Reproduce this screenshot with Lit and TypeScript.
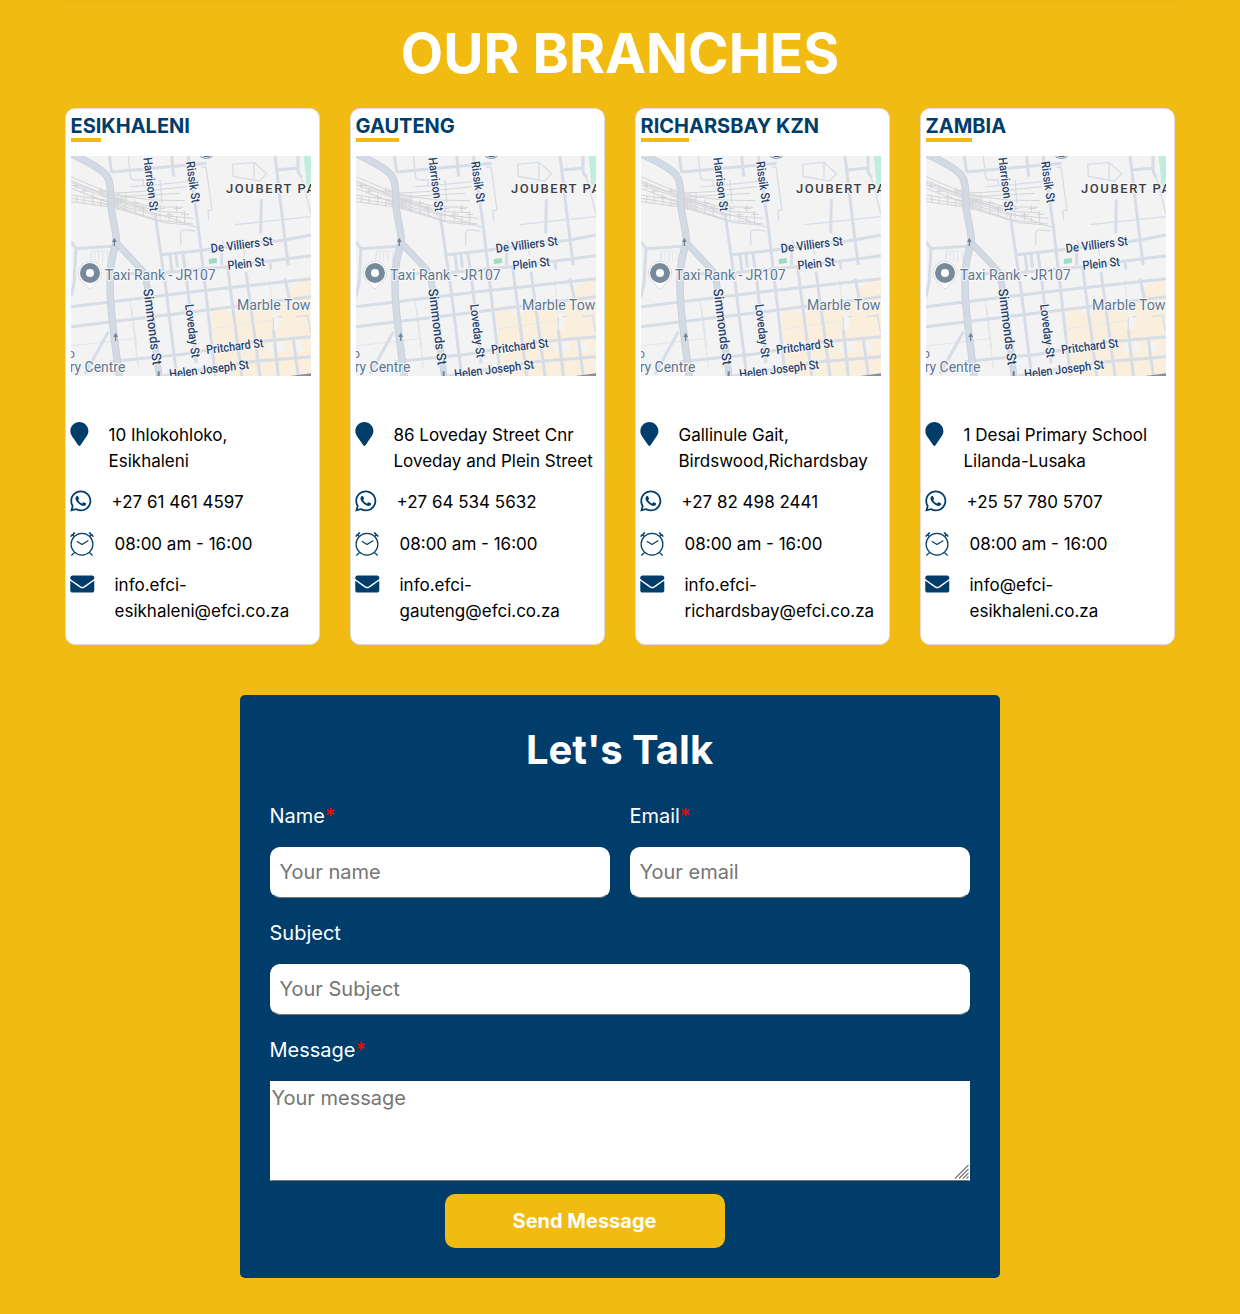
import { LitElement, html, svg, css } from "lit";
import { customElement, property } from "lit/decorators.js";

interface Branch {
  name: string;
  bar: number;
  address: string[];
  phone: string;
  email: string[];
}

const BRANCHES: Branch[] = [
  { name: "ESIKHALENI", bar: 30, address: ["10 Ihlokohloko,", "Esikhaleni"], phone: "+27 61 461 4597", email: ["info.efci-", "esikhaleni@efci.co.za"] },
  { name: "GAUTENG", bar: 43, address: ["86 Loveday Street Cnr", "Loveday and Plein Street"], phone: "+27 64 534 5632", email: ["info.efci-", "gauteng@efci.co.za"] },
  { name: "RICHARSBAY KZN", bar: 48, address: ["Gallinule Gait,", "Birdswood,Richardsbay"], phone: "+27 82 498 2441", email: ["info.efci-", "richardsbay@efci.co.za"] },
  { name: "ZAMBIA", bar: 46, address: ["1 Desai Primary School", "Lilanda-Lusaka"], phone: "+25 57 780 5707", email: ["info@efci-", "esikhaleni.co.za"] },
];

/* Street map, drawn on a 3x grid: 720 x 660 units for 240 x 220 px. */
@customElement("street-map")
export class StreetMap extends LitElement {
  static styles = css`
    :host { display: block; width: 240px; height: 220px; }
    svg { display: block; }
    .base { fill: #f3f3f4; }
    .block { fill: #f9efdc; }
    .park { fill: #bfeedd; }
    .line { fill: none; stroke: #d6dde6; }
    .edge { fill: none; stroke: #c3ccd8; }
    .core { fill: none; stroke: #d2dae4; }
    .rail { fill: none; stroke: #d3d4d7; stroke-width: 3; }
    .thin { fill: none; stroke: #e0e4ea; stroke-width: 3; }
    .label { font-family: Roboto, sans-serif; paint-order: stroke; stroke: #f7f8fa; stroke-width: 6px; stroke-linejoin: round; }
    .street { fill: #28426b; font-weight: 500; font-size: 37px; }
    .place { fill: #5f7690; font-size: 43px; }
    .area { fill: #3d4043; font-weight: 500; font-size: 39px; }
  `;

  render() {
    const main = "M26 8C70 28 110 48 134 70C152 88 152 115 153 165C156 215 176 258 167 287C150 330 148 380 151 440C156 530 170 610 178 682";
    const diagonal = "M169 278L244 358Q258 375 262 415L298 682";
    const ties = svg`${[50, 72, 98, 122, 150, 172, 198, 225, 250, 276, 300, 328, 350, 374].map(
      (x, i) => svg`<path d=${`M${x} ${85 + x * 0.23 + (i % 3) * 12}v20M${x - 9} ${95 + x * 0.23 + (i % 3) * 12}h22M${x} ${128 + x * 0.2}v18`} />`,
    )}`;
    return html`<svg width="240" height="220" viewBox="33 18 720 660">
      <rect class="base" x="33" y="18" width="720" height="660" />
      <path class="block" d="M453 482L498 476L502 492L533 488L531 470L634 462L640 480L690 440L686 416L722 392L753 386V678H472L462 600Z" />
      <path class="base" d="M624 580l50-4 4 26-50 6zM694 578l30-3 4 28-32 4zM640 490l18-2v50h-18z" />
      <path class="park" d="M731 18h22v76h-14z" />
      <path class="park" d="M735 94h18v30z" />
      <g class="thin">
        <path d="M210 450L235 655M215 470L230 590M628 390L640 480" />
        <path stroke-dasharray="5 4" d="M460 536L636 512" />
        <path d="M33 588L220 566M95 325v-22h48M92 310v40M105 306v26M116 306v30M128 306v30M143 306v30" />
      </g>
      <g class="line" stroke-width="4">
        <path d="M205 18l6 58q2 16 14 14h25v16M211 110l60-4 139-14M438 50l-14 2M438 50l18 130-12 2 2 30M518 43l64-6 38 34-22 22-78-14zM582 37v48M362 285v-35q2-12 16-10l28 3M525 224L753 200M486 270l8 18M724 84l14 50 15 60M548 282l6 34M640 502v44M652 500h14M710 500l33-4 8 50M300 90l6 70" />
      </g>
      <g class="line" stroke-width="9">
        <path d="M148 18L155 68M155 66L440 40M335 18l6 62M650 60L715 54M645 18L675 270L685 345M714 18V60q0 12 12 22M604 148L602 250" />
        <path d="M48 296L165 288M33 275L48 296L42 400L33 440M305 314L390 305L675 270L753 255M285 190L305 330L315 395L350 678M368 305L382 405L408 640M330 314l6 50M348 312l4 40" />
        <path d="M33 470L400 425L753 386M33 530L400 485L753 440M148 635L370 613L570 577L753 560M310 678L570 635L753 620M180 372L310 368L500 350L753 317" />
        <path d="M385 18L415 230L435 405L466 678M502 345L545 678M558 365L600 678M630 338l3 20M675 385L688 445M640 540L655 678M700 568L715 678M75 672L145 545M485 345V310" />
      </g>
      <g class="rail">
        <path d="M33 80L160 135L280 150L375 152M33 92L150 140L270 170L370 172M33 105L165 150L300 185L375 188M33 115L150 160L290 195L400 205M33 135L170 155L320 200L410 232M33 145L160 165L290 210L400 222M33 155L160 172L310 218L390 225M150 130L240 125L380 110M180 140L360 130M33 98L250 175" />
        ${ties}
      </g>
      <path class="edge" stroke-width="22" d=${main} />
      <path class="core" stroke-width="18" d=${main} />
      <path class="edge" stroke-width="20" d=${diagonal} />
      <path class="core" stroke-width="16" d=${diagonal} />
      <path class="rail" opacity=".8" d="M120 117L200 140M120 124L200 150M120 136L200 158M120 150L200 168M120 158L200 182" />
      <path fill="#9bdcc5" d="M446 327l24-3 1 15-24 3z" />
      <path fill="#718395" d="M161 288v-12h-5l7-13 7 13h-5v12zM165 573v-12h-5l7-13 7 13h-5v12zM293 678v-14h6v14z" />
      <path fill="#8592a2" d="M690 678l63-8v8z" />
      <ellipse cx="439" cy="8" rx="23" ry="17" fill="#fff" stroke="#6d8199" stroke-width="3" />
      <path d="M428 18h24l-6 3h-12z" fill="#4e6480" />
      <path fill="#fff" stroke="#c8cdd2" stroke-width="2" d="M90 416c-6 0-10-12-22-20a35 35 0 1 1 44 0c-12 8-16 20-22 20z" />
      <circle cx="90" cy="369" r="21" fill="#fff" stroke="#778a9b" stroke-width="18" />
      <g class="label street">
        <text transform="translate(250 24) rotate(83)" textLength="162" lengthAdjust="spacingAndGlyphs">Harrison St</text>
        <text transform="translate(378 36) rotate(82)" textLength="125" lengthAdjust="spacingAndGlyphs">Rissik St</text>
        <text transform="translate(454 308) rotate(-7)" textLength="187" lengthAdjust="spacingAndGlyphs">De Villiers St</text>
        <text transform="translate(504 359) rotate(-6)" textLength="112" lengthAdjust="spacingAndGlyphs">Plein St</text>
        <text transform="translate(250 418) rotate(83)" textLength="230" lengthAdjust="spacingAndGlyphs" font-size="40">Simmonds St</text>
        <text transform="translate(375 464) rotate(83)" textLength="162" lengthAdjust="spacingAndGlyphs">Loveday St</text>
        <text transform="translate(440 612) rotate(-7)" textLength="173" lengthAdjust="spacingAndGlyphs">Pritchard St</text>
        <text transform="translate(329 685) rotate(-7)" textLength="241" lengthAdjust="spacingAndGlyphs">Helen Joseph St</text>
      </g>
      <g class="label place">
        <text x="135" y="390" textLength="332" lengthAdjust="spacingAndGlyphs">Taxi Rank - JR107</text>
        <text x="531" y="480" textLength="220" lengthAdjust="spacingAndGlyphs">Marble Tow</text>
        <text x="29" y="667" textLength="167" lengthAdjust="spacingAndGlyphs">ry Centre</text>
        <text x="23" y="624" font-size="38">o</text>
      </g>
      <text class="label area" x="498" y="128" textLength="267" lengthAdjust="spacing">JOUBERT PA</text>
    </svg>`;
  }
}

@customElement("branch-card")
export class BranchCard extends LitElement {
  @property({ attribute: false }) branch!: Branch;

  static styles = css`
    :host {
      display: block; box-sizing: border-box; width: 255px; height: 537px;
      border: 1px solid #ddd; border-radius: 10px; background: #fff;
      padding: 5px 0 0 5px; color: #000;
    }
    .name { margin: 0 0 0 -0.5px; font-size: 20px; line-height: 24px; font-weight: 700; color: #003d6b; }
    .bar { height: 4px; background: #f1bb12; }
    street-map { margin-top: 14px; }
    .list { margin: 46px 0 0 -1px; display: flex; flex-direction: column; gap: 15px; font-size: 17px; line-height: 26.2px; }
    .row { display: flex; gap: 20.5px; white-space: nowrap; }
    .icon { flex: none; display: block; fill: #003d6b; overflow: visible; }
    .pin { width: 18px; height: 24px; }
    .chat { width: 21px; height: 22px; margin-top: 1px; }
    .clock, .mail { width: 24px; height: 24px; }
    .clock { margin-top: 1px; }
    .mail { height: 20px; margin-top: 2px; }
    .clock { fill: none; stroke: #003d6b; stroke-width: 1.2; stroke-linecap: round; stroke-linejoin: round; }
  `;

  render() {
    const b = this.branch;
    return html`
      <h3 class="name">${b.name}</h3>
      <div class="bar" style="width:${b.bar}px"></div>
      <street-map></street-map>
      <div class="list">
        <div class="row">
          <svg class="icon pin" viewBox="-8 0 384 512"><path d="M172.268 501.67C26.97 291.031 0 269.413 0 192 0 85.961 85.961 0 192 0s192 85.961 192 192c0 77.413-26.97 99.031-172.268 309.67-9.535 13.774-29.93 13.773-39.464 0z" /></svg>
          <span>${b.address[0]}<br />${b.address[1]}</span>
        </div>
        <div class="row">
          <svg class="icon chat" viewBox="-6 32 448 448"><path d="M380.9 97.1C339 55.1 283.2 32 223.9 32c-122.4 0-222 99.6-222 222 0 39.1 10.2 77.3 29.6 111L0 480l117.7-30.9c32.4 17.7 68.9 27 106.1 27h.1c122.3 0 224.1-99.6 224.1-222 0-59.3-25.2-115-67.1-157zm-157 341.6c-33.2 0-65.7-8.9-94-25.7l-6.7-4-69.8 18.3L72 359.2l-4.4-7c-18.500-29.4-28.200-63.300-28.200-98.200 0-101.700 82.800-184.500 184.600-184.500 49.300 0 95.600 19.200 130.400 54.100 34.800 34.900 56.200 81.200 56.100 130.500 0 101.800-84.900 184.600-186.600 184.600zm101.200-138.200c-5.500-2.800-32.800-16.200-37.900-18-5.100-1.900-8.800-2.800-12.500 2.800-3.700 5.600-14.300 18-17.600 21.800-3.200 3.700-6.500 4.200-12 1.400-32.600-16.300-54-29.100-75.500-66-5.700-9.800 5.700-9.100 16.300-30.300 1.800-3.700.9-6.900-.5-9.700-1.400-2.800-12.500-30.100-17.100-41.200-4.500-10.800-9.100-9.300-12.500-9.500-3.200-.2-6.900-.2-10.600-.2-3.700 0-9.700 1.400-14.800 6.900-5.100 5.600-19.400 19-19.400 46.300 0 27.300 19.900 53.700 22.600 57.400 2.800 3.700 39.100 59.700 94.800 83.800 35.200 15.200 49 16.500 66.600 13.900 10.700-1.600 32.800-13.400 37.400-26.400 4.600-13 4.600-24.100 3.200-26.400-1.300-2.500-5-3.900-10.500-6.600z" /></svg>
          <span>${b.phone}</span>
        </div>
        <div class="row">
          <svg class="icon clock" viewBox="0 0 24 24"><circle cx="12" cy="12.200" r="10.900" /><path d="M7.200 9.600L12 12.500L18 8.800M4.300 20.700L1.600 23.200M19.700 20.700L22.400 23.200M1 4.300L4.700 1M2.300 2.400L4 4.200M1 4.300L1.500 3.200M3.500 1.200L4.700 1M23 4.300L19.300 1M21.700 2.400L20 4.200M23 4.300L22.500 3.200M20.500 1.200L19.300 1" /></svg>
          <span>08:00 am - 16:00</span>
        </div>
        <div class="row">
          <svg class="icon mail" viewBox="-6 32 512 448" preserveAspectRatio="none"><path d="M502.300 190.800c3.900-3.100 9.700-.2 9.700 4.700V400c0 26.500-21.500 48-48 48H48c-26.500 0-48-21.500-48-48V195.600c0-5 5.700-7.800 9.700-4.700 22.400 17.400 52.100 39.500 154.100 113.600 21.100 15.400 56.700 47.800 92.200 47.600 35.700.3 72-32.800 92.300-47.600 102-74.100 131.600-96.300 154-113.700zM256 320c23.200.4 56.600-29.200 73.400-41.400 132.700-96.300 142.800-104.700 173.400-128.700 5.800-4.500 9.200-11.500 9.200-18.900v-19c0-26.500-21.500-48-48-48H48c-26.500 0-48 21.500-48 48v19c0 7.400 3.400 14.300 9.200 18.900 30.600 23.900 40.700 32.400 173.400 128.700 16.800 12.200 50.200 41.800 73.400 41.400z" /></svg>
          <span>${b.email[0]}<br />${b.email[1]}</span>
        </div>
      </div>
    `;
  }
}

@customElement("app-root")
export class AppRoot extends LitElement {
  static styles = css`
    :host {
      display: flex; flex-direction: column; align-items: center; box-sizing: border-box;
      height: 1314px; background: #f1bb12; font-family: Inter, sans-serif; color: #fff;
    }
    .shade { width: 1110px; height: 7px; background: linear-gradient(#edb812, #f1bb12); }
    .heading { margin: 12px 0 21px; font-size: 55px; line-height: 68px; font-weight: 700; white-space: nowrap; }
    .cards { display: flex; gap: 30px; }
    .form {
      box-sizing: border-box; width: 760px; height: 583px; margin-top: 50px; padding: 30px;
      border-radius: 5px; background: #003d6b; display: flex; flex-direction: column;
    }
    .title { margin: 0 1px 29px 0; text-align: center; font-size: 40px; line-height: 50px; font-weight: 700; }
    .pair { display: grid; grid-template-columns: 1fr 1fr; gap: 20px; }
    .field { display: flex; flex-direction: column; margin-bottom: 23px; font-size: 20px; line-height: 24px; }
    .caption { height: 24px; margin: 0 0 19px -0.5px; }
    .required { color: #f00; font-weight: 500; }
    .input, .area {
      box-sizing: border-box; width: 100%; margin: 0; background: #fff; outline: 0;
      border: 1px solid #fff; border-bottom-color: #767676; font: 400 20px/24px Inter, sans-serif; color: #000;
    }
    .input { height: 51px; padding: 0 9px 2px 8.5px; border-radius: 10px; }
    .area { display: block; height: 100px; padding: 4px 1px 4px 0.5px; resize: none; }
    .box { position: relative; }
    .grip { position: absolute; right: 1px; bottom: 2px; width: 15px; height: 15px; stroke: #777; stroke-width: 1.2; }
    .input::placeholder, .area::placeholder { color: #757575; opacity: 1; }
    .message { margin-bottom: 13px; }
    .send {
      width: 280px; height: 54px; margin-left: 175px; padding: 0 1px 0 0; border: 0; border-radius: 10px;
      background: #f1bb12; color: #fff; font: 700 20px/24px Inter, sans-serif;
    }
  `;

  private field(label: string, placeholder: string, required = false) {
    return html`<label class="field">
      <span class="caption">${label}${required ? html`<span class="required">*</span>` : ""}</span>
      <input class="input" placeholder=${placeholder} />
    </label>`;
  }

  render() {
    return html`
      <div class="shade"></div>
      <h1 class="heading">OUR BRANCHES</h1>
      <div class="cards">${BRANCHES.map((b) => html`<branch-card .branch=${b}></branch-card>`)}</div>
      <div class="form">
        <h2 class="title">Let's Talk</h2>
        <div class="pair">
          ${this.field("Name", "Your name", true)}
          ${this.field("Email", "Your email", true)}
        </div>
        ${this.field("Subject", "Your Subject")}
        <label class="field message">
          <span class="caption">Message<span class="required">*</span></span>
          <span class="box">
            <textarea class="area" placeholder="Your message"></textarea>
            <svg class="grip" viewBox="0 0 15 15"><path d="M1 14.500L14.500 1M5 14.500L14.500 5M9 14.500L14.500 9M12.500 14.500L14.500 12.500" /></svg>
          </span>
        </label>
        <button class="send">Send Message</button>
      </div>
    `;
  }
}
